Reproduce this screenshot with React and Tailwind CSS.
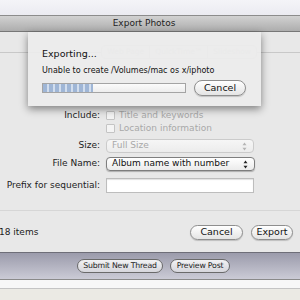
import React from 'react'

// Export Photos dialog with the "Exporting…" sheet dropped over it.

const font = { fontFamily: '"DejaVu Sans", "Liberation Sans", sans-serif' }

function Arrows({ dim }) {
  const c = dim ? '#b4b4b4' : '#222'
  return (
    <svg width="5" height="9" viewBox="0 0 5 9" className="shrink-0">
      <path d="M2.5 0.5 L4.5 3.2 L0.5 3.2 Z" fill={c} />
      <path d="M2.5 8.5 L4.5 5.8 L0.5 5.8 Z" fill={c} />
    </svg>
  )
}

function Pill({ children, className = '' }) {
  return (
    <div className={`flex items-center justify-center rounded-full border border-[#8e8e8e] bg-gradient-to-b from-white to-[#e4e4e4] text-[9.5px] text-[#111] shadow-[0_1px_1px_rgba(0,0,0,0.18)] ${className}`}>
      {children}
    </div>
  )
}

function Check({ label }) {
  return (
    <div className="flex items-center h-[13px]">
      <div className="w-[9px] h-[9px] rounded-[1px] border border-[#c4c4c4] bg-[#f4f4f4]" />
      <span className="ml-[4px] text-[9px] text-[#a9a9a9]">{label}</span>
    </div>
  )
}

function Label({ children }) {
  return (
    <div className="w-[100px] shrink-0 text-right text-[9px] text-[#1c1c1c]">
      {children}
    </div>
  )
}

export default function App() {
  return (
    <div style={font} className="w-[300px] h-[300px] overflow-hidden bg-[#ebeae4] flex flex-col">
      {/* strip above the window */}
      <div className="h-[16px] shrink-0 bg-gradient-to-b from-[#f4f4f8] to-[#ebebf1] border-b border-[#8c8c8c]" />

      {/* title bar */}
      <div className="h-[16px] shrink-0 bg-gradient-to-b from-[#d2d2d2] to-[#adadad] border-b border-[#777] flex items-center justify-center pr-[12px]">
        <span className="text-[9px] text-[#1e1e1e]">Export Photos</span>
      </div>

      {/* dialog body */}
      <div className="relative h-[220px] shrink-0 bg-[#e8e8e8]">
        {/* tab view */}
        <div className="mt-[20px] border-t border-[#c8c8c8]">
          <div className="-mt-[8px] flex justify-end pr-[43px] h-[14px]">
            <div className="flex h-[14px] rounded-[4px] border border-[#d6d6d6] bg-[#e4e4e4] text-[7.5px] text-[#d0d0d0]">
              <div className="px-[5px] flex items-center border-r border-[#d6d6d6]">Web Page</div>
              <div className="px-[5px] flex items-center border-r border-[#d6d6d6]">QuickTime™</div>
              <div className="px-[5px] flex items-center">Slideshow</div>
            </div>
          </div>

          {/* rows hidden under the sheet */}
          <div className="h-[12px]" />
          <div className="mt-[19px] h-[12px]" />

          <div className="mt-[7px] flex items-center h-[13px] gap-[6px]">
            <Label>Include:</Label>
            <Check label="Title and keywords" />
          </div>
          <div className="flex items-center h-[13px] gap-[6px]">
            <div className="w-[100px] shrink-0" />
            <Check label="Location information" />
          </div>

          <div className="mt-[4px] flex items-center h-[14px] gap-[6px]">
            <Label>Size:</Label>
            <div className="w-[148px] h-[14px] rounded-[4px] border border-[#cbcbcb] bg-gradient-to-b from-[#f6f6f6] to-[#ececec] flex items-center pl-[5px] pr-[6px]">
              <span className="flex-1 text-[9px] text-[#a8a8a8]">Full Size</span>
              <Arrows dim />
            </div>
          </div>

          <div className="mt-[4px] flex items-center h-[14px] gap-[6px]">
            <Label>File Name:</Label>
            <div className="w-[149px] h-[14px] rounded-[4px] border border-[#7e7e7e] bg-gradient-to-b from-white to-[#ebebeb] shadow-[0_1px_1px_rgba(0,0,0,0.25)] flex items-center pl-[5px] pr-[6px]">
              <span className="flex-1 text-[9px] text-[#111]">Album name with number</span>
              <Arrows />
            </div>
          </div>

          <div className="mt-[7px] flex items-center h-[15px] gap-[6px]">
            <Label>Prefix for sequential:</Label>
            <div className="w-[148px] h-[15px] border border-[#bdbdbd] bg-white shadow-[inset_0_1px_1px_rgba(0,0,0,0.12)]" />
          </div>

          <div className="mt-[17px] border-b border-[#d6d6d6]" />
        </div>

        <div className="mt-[14px] flex items-center h-[15px] pr-[7px]">
          <span className="-ml-[1px] text-[9px] text-[#1c1c1c]">18 items</span>
          <div className="ml-auto flex gap-[8px]">
            <Pill className="w-[53px] h-[15px]">Cancel</Pill>
            <Pill className="w-[42px] h-[15px]">Export</Pill>
          </div>
        </div>

        {/* progress sheet */}
        <div className="absolute left-[28px] top-0 w-[233px] h-[74px] bg-[#ececec]/[0.9] shadow-[0_3px_8px_rgba(0,0,0,0.45)] pl-[14px] pt-[16px]">
          <div className="text-[9.5px] leading-[12px] text-[#111]">Exporting...</div>
          <div className="mt-[5px] text-[8px] leading-[11px] text-[#111]">Unable to create /Volumes/mac os x/iphoto</div>
          <div className="mt-[4px] flex items-center">
            <div className="w-[144px] h-[10px] border border-[#a4a4a4] bg-gradient-to-b from-[#fbfbfb] to-[#ededed] overflow-hidden">
              <div className="w-[50px] h-full bg-[repeating-linear-gradient(90deg,#9fb6d6_0px,#9fb6d6_4px,#d2deee_4px,#d2deee_6px)]" />
            </div>
            <Pill className="ml-[8px] w-[52px] h-[16px]">Cancel</Pill>
          </div>
        </div>
      </div>

      {/* forum toolbar */}
      <div className="h-[28px] shrink-0 border-t border-[#6e6e78] border-b border-b-[#8a8a8a] bg-gradient-to-b from-[#9b9bab] to-[#cbcbd6] flex items-center pl-[77px] gap-[7px]">
        <div className="w-[86px] h-[14px] rounded-full border border-[#6a6a6a] bg-gradient-to-b from-[#f2f2f4] to-[#d6d6dc] flex items-center justify-center text-[7.8px] tracking-[-0.2px] text-[#222] whitespace-nowrap">Submit New Thread</div>
        <div className="w-[60px] h-[14px] rounded-full border border-[#6a6a6a] bg-gradient-to-b from-[#f2f2f4] to-[#d6d6dc] flex items-center justify-center text-[7.8px] tracking-[-0.2px] text-[#222] whitespace-nowrap">Preview Post</div>
      </div>

      <div className="h-[9px] shrink-0 bg-[#f7f7f7] border-b border-[#c4c4c4]" />
    </div>
  )
}
